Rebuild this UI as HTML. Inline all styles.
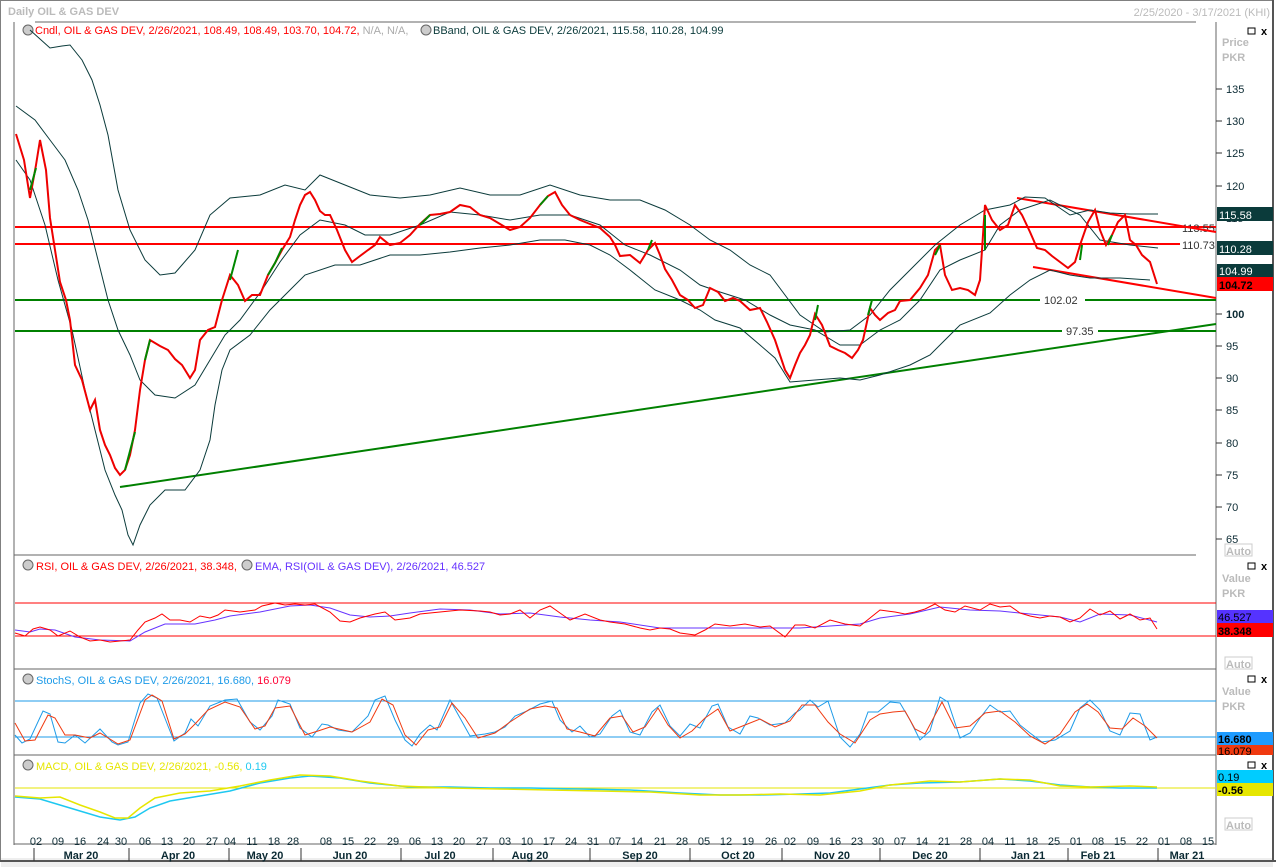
<!DOCTYPE html>
<html><head><meta charset="utf-8"><style>
body{margin:0;background:#fff;font-family:"Liberation Sans",sans-serif}
svg{display:block}
text{font-family:"Liberation Sans",sans-serif;font-size:11px}
</style></head><body>
<svg width="1276" height="867" viewBox="0 0 1276 867">
<rect width="1276" height="867" fill="#fff"/>
<rect x="0.5" y="0.5" width="1273" height="860" fill="none" stroke="#808080"/>
<rect x="1" y="858" width="1272" height="9" fill="#eee"/>
<line x1="0" y1="861" x2="1276" y2="861" stroke="#555" stroke-width="2"/>
<line x1="1273" y1="0" x2="1273" y2="861" stroke="#555" stroke-width="2"/>
<text x="8" y="15" fill="#bbb" font-weight="bold" font-size="12">Daily OIL &amp; GAS DEV</text>
<text x="1270" y="16" fill="#bbb" text-anchor="end">2/25/2020 - 3/17/2021 (KHI)</text>
<line x1="35" y1="22" x2="1196" y2="22" stroke="#666"/>
<line x1="14" y1="22" x2="14" y2="845" stroke="#666"/>
<line x1="1216" y1="22" x2="1216" y2="845" stroke="#666"/>
<line x1="14" y1="555" x2="1196" y2="555" stroke="#666"/>
<line x1="14" y1="669" x2="1216" y2="669" stroke="#666"/>
<line x1="14" y1="755" x2="1216" y2="755" stroke="#666"/>
<line x1="14" y1="844" x2="1216" y2="844" stroke="#666"/>
<circle cx="28" cy="30" r="5" fill="#ccc" stroke="#666"/>
<text x="35" y="34" fill="#f00">Cndl, OIL &amp; GAS DEV, 2/26/2021, 108.49, 108.49, 103.70, 104.72, <tspan fill="#aaa">N/A, N/A,</tspan></text>
<circle cx="426" cy="30" r="5" fill="#ccc" stroke="#666"/>
<text x="433" y="34" fill="#0b3b3b">BBand, OIL &amp; GAS DEV, 2/26/2021, 115.58, 110.28, 104.99</text>
<circle cx="28" cy="565" r="5" fill="#ccc" stroke="#666"/>
<text x="36" y="570" fill="#f00">RSI, OIL &amp; GAS DEV, 2/26/2021, 38.348,</text>
<circle cx="247" cy="565" r="5" fill="#ccc" stroke="#666"/>
<text x="255" y="570" fill="#6633ff">EMA, RSI(OIL &amp; GAS DEV), 2/26/2021, 46.527</text>
<circle cx="28" cy="679" r="5" fill="#ccc" stroke="#666"/>
<text x="36" y="684" fill="#1e9be8">StochS, OIL &amp; GAS DEV, 2/26/2021, 16.680, <tspan fill="#f03">16.079</tspan></text>
<circle cx="28" cy="765" r="5" fill="#ccc" stroke="#666"/>
<text x="36" y="770" fill="#e6e600">MACD, OIL &amp; GAS DEV, 2/26/2021, -0.56, <tspan fill="#1ec8f0">0.19</tspan></text>
<g fill="none" stroke="#000"><rect x="1248" y="28" width="7" height="6"/><rect x="1248" y="563" width="7" height="6"/><rect x="1248" y="676" width="7" height="6"/><rect x="1248" y="762" width="7" height="6"/></g>
<g font-size="10" font-weight="bold"><text x="1261" y="35">x</text><text x="1261" y="570">x</text><text x="1261" y="683">x</text><text x="1261" y="769">x</text></g>
<g fill="#bbb" font-weight="bold" font-size="11"><text x="1222" y="46">Price</text><text x="1222" y="61">PKR</text>
<text x="1222" y="582">Value</text><text x="1222" y="597">PKR</text>
<text x="1222" y="695">Value</text><text x="1222" y="710">PKR</text></g>
<g fill="#0b2a33" font-size="11">
<text x="1226" y="93">135</text><text x="1226" y="125">130</text><text x="1226" y="157">125</text><text x="1226" y="190">120</text><text x="1226" y="222">115</text><text x="1226" y="254">110</text>
<text x="1226" y="318" font-weight="bold" font-size="12">100</text><text x="1226" y="350">95</text><text x="1226" y="382">90</text><text x="1226" y="414">85</text><text x="1226" y="447">80</text><text x="1226" y="479">75</text><text x="1226" y="511">70</text><text x="1226" y="543">65</text></g>
<g stroke="#333"><line x1="1216" y1="89" x2="1222" y2="89"/><line x1="1216" y1="121" x2="1222" y2="121"/><line x1="1216" y1="153" x2="1222" y2="153"/><line x1="1216" y1="186" x2="1222" y2="186"/><line x1="1216" y1="314" x2="1222" y2="314"/><line x1="1216" y1="346" x2="1222" y2="346"/><line x1="1216" y1="378" x2="1222" y2="378"/><line x1="1216" y1="410" x2="1222" y2="410"/><line x1="1216" y1="443" x2="1222" y2="443"/><line x1="1216" y1="475" x2="1222" y2="475"/><line x1="1216" y1="507" x2="1222" y2="507"/><line x1="1216" y1="539" x2="1222" y2="539"/></g>
<g fill="none" stroke="#ccc"><rect x="1225" y="544" width="27" height="12"/><rect x="1225" y="657" width="27" height="12"/><rect x="1225" y="818" width="27" height="12"/></g>
<g fill="#bbb" font-size="11" font-weight="bold"><text x="1226" y="555">Auto</text><text x="1226" y="668">Auto</text><text x="1226" y="829">Auto</text></g>
<rect x="1217" y="207" width="56" height="14" fill="#0b3b3b"/><text x="1219" y="219" fill="#fff" font-size="12">115.58</text>
<rect x="1217" y="241" width="56" height="14" fill="#0b3b3b"/><text x="1219" y="253" fill="#fff" font-size="12">110.28</text>
<rect x="1217" y="264" width="56" height="13" fill="#0b3b3b"/><text x="1219" y="275" fill="#fff" font-size="12">104.99</text>
<rect x="1217" y="277" width="56" height="14" fill="#f00"/><text x="1219" y="289" fill="#000" font-weight="bold" font-size="12">104.72</text>
<rect x="1217" y="610" width="56" height="13" fill="#5533ff"/><text x="1218" y="621" fill="#000" font-size="12">46.527</text>
<rect x="1217" y="623" width="56" height="14" fill="#f00"/><text x="1218" y="635" fill="#000" font-weight="bold" font-size="12">38.348</text>
<rect x="1217" y="732" width="56" height="13" fill="#1e9bff"/><text x="1218" y="743" fill="#000" font-weight="bold" font-size="12">16.680</text>
<rect x="1217" y="745" width="56" height="10" fill="#f03a10"/><text x="1218" y="755" fill="#000" font-size="12">16.079</text>
<rect x="1217" y="770" width="56" height="13" fill="#00ccff"/><text x="1218" y="781" fill="#000" font-size="12">0.19</text>
<rect x="1217" y="783" width="56" height="13" fill="#e6e600"/><text x="1218" y="794" fill="#000" font-weight="bold" font-size="12">-0.56</text>
<line x1="15" y1="227" x2="1216" y2="227" stroke="#f00" stroke-width="2"/>
<line x1="15" y1="244" x2="1180" y2="244" stroke="#f00" stroke-width="2"/>
<text x="1182" y="232" fill="#333">113.55</text><text x="1182" y="249" fill="#333">110.73</text>
<line x1="15" y1="300" x2="1040" y2="300" stroke="#008000" stroke-width="2"/><line x1="1085" y1="300" x2="1216" y2="300" stroke="#008000" stroke-width="2"/>
<text x="1044" y="304" fill="#333">102.02</text>
<line x1="15" y1="331" x2="1062" y2="331" stroke="#008000" stroke-width="2"/><line x1="1098" y1="331" x2="1216" y2="331" stroke="#008000" stroke-width="2"/>
<text x="1066" y="335" fill="#333">97.35</text>
<line x1="120" y1="487" x2="1216" y2="324" stroke="#008000" stroke-width="2"/>
<line x1="1017" y1="198" x2="1216" y2="232" stroke="#f00" stroke-width="2"/>
<line x1="1033" y1="267" x2="1216" y2="298" stroke="#f00" stroke-width="2"/>
<g fill="none" stroke="#0b3b3b" stroke-width="1">
<polyline points="16,106 35,120 50,140 65,160 78,190 88,220 98,260 108,300 118,330 130,355 140,380 155,395 175,398 195,385 210,360 225,335 240,320 262,290 280,262 300,235 320,220 345,225 365,235 390,235 420,225 450,212 480,215 510,220 540,215 570,215 600,225 625,245 650,255 680,270 700,285 720,292 745,300 770,315 790,325 815,330 840,345 860,345 880,330 900,320 920,300 940,270 960,260 985,250 1000,225 1020,210 1050,200 1080,215 1100,240 1130,245 1158,248"/>
<polyline points="30,30 50,48 62,46 70,45 82,60 92,80 100,105 108,135 118,190 130,230 145,260 160,275 175,273 195,250 210,215 230,198 260,195 285,185 305,190 320,175 345,185 370,195 400,198 430,195 460,188 490,195 520,195 550,185 580,195 610,200 640,200 665,210 690,225 710,240 730,250 750,265 770,275 800,315 825,332 850,330 870,315 890,290 910,270 935,245 960,225 985,210 1010,205 1025,197 1045,198 1070,215 1090,210 1110,213 1130,214 1158,214"/>
<polyline points="16,160 30,180 45,225 58,280 72,330 85,390 95,430 105,470 115,495 122,510 128,535 133,545 140,525 150,505 165,490 185,490 200,470 210,440 215,405 222,370 230,350 250,335 270,310 290,290 305,275 335,265 360,265 390,255 420,255 450,252 480,248 510,245 540,240 565,240 590,245 610,255 630,270 655,290 680,300 700,310 715,320 740,328 760,345 775,358 790,382 815,380 840,378 860,380 880,375 910,365 930,355 945,340 960,325 990,313 1010,295 1030,280 1050,270 1070,275 1090,278 1120,278 1150,280"/>
</g>
<polyline fill="none" stroke="#e00" stroke-width="2" points="16,134 24,160 30,198 36,165 40,140 46,170 50,218 55,250 60,282 66,300 70,320 75,365 82,380 90,410 95,400 100,430 105,445 110,455 115,468 120,475 125,470 130,455 135,430 140,390 145,360 150,340 160,346 168,350 175,359 182,365 190,378 195,370 200,340 208,330 215,327 222,300 230,275 238,285 245,301 252,295 260,295 268,275 275,263 282,250 290,237 295,220 300,205 305,195 310,192 315,200 320,211 325,215 330,215 337,230 345,250 352,262 360,256 368,250 375,245 380,237 390,245 400,243 410,235 420,224 430,215 440,214 450,212 460,205 470,207 480,215 490,218 500,224 510,230 520,227 530,218 540,205 548,196 555,192 562,205 570,215 580,220 590,224 600,228 610,237 615,245 620,256 630,255 640,263 648,250 655,243 660,255 665,269 672,280 680,295 688,300 695,308 703,305 710,288 718,292 725,301 733,298 740,301 750,310 760,308 767,322 775,340 780,355 785,370 790,378 795,365 800,353 805,345 810,335 815,314 822,325 830,346 838,350 845,353 852,358 858,350 863,340 870,308 875,315 880,320 888,313 895,310 900,301 910,300 920,288 928,275 935,250 940,245 945,275 952,290 960,288 968,290 975,295 980,280 985,205 992,220 1000,230 1008,225 1015,205 1022,215 1030,232 1037,248 1045,250 1052,256 1060,262 1068,268 1075,262 1080,245 1088,222 1095,210 1100,230 1106,245 1112,235 1118,222 1125,215 1130,240 1136,245 1142,255 1150,262 1157,284"/>
<g stroke="#080" stroke-width="2" fill="none">
<polyline points="30,190 36,168"/><polyline points="125,470 135,432"/><polyline points="145,360 150,340"/><polyline points="230,280 238,250"/><polyline points="268,275 275,263 282,248"/><polyline points="420,225 430,215"/><polyline points="540,205 548,196"/><polyline points="648,250 652,240"/><polyline points="815,320 818,305"/><polyline points="868,315 872,300"/><polyline points="935,255 940,245"/><polyline points="985,250 985,215"/><polyline points="1080,260 1082,245"/><polyline points="1108,245 1112,235"/></g>
<line x1="15" y1="603" x2="1216" y2="603" stroke="#f00"/>
<line x1="15" y1="636" x2="1216" y2="636" stroke="#f00"/>
<polyline fill="none" stroke="#6633ff" points="15,630 30,632 40,629 55,630 75,637 100,640 130,641 145,632 165,624 195,624 215,620 230,616 260,612 290,606 310,605 330,608 350,615 370,617 390,616 410,613 440,609 470,610 500,614 530,613 560,617 590,620 620,622 660,628 700,628 730,628 770,628 800,628 830,626 860,624 880,618 910,614 940,607 970,610 1000,611 1030,614 1060,617 1080,622 1100,614 1130,615 1157,622"/>
<polyline fill="none" stroke="#f00" points="15,633 25,636 33,629 40,627 50,630 58,636 70,631 80,637 90,641 100,640 110,642 120,641 130,640 138,630 145,622 155,618 162,614 170,620 180,620 190,622 200,616 210,618 218,615 225,610 240,612 255,610 262,606 275,603 285,605 295,604 305,605 315,604 330,612 340,621 350,622 360,618 375,614 385,612 395,620 410,618 420,614 440,612 460,610 480,611 490,612 500,615 510,614 520,610 530,618 540,610 550,606 560,613 570,620 585,614 600,620 610,622 625,624 640,628 650,630 660,628 670,629 680,633 695,635 705,630 715,624 730,626 745,624 760,627 770,626 785,637 795,625 805,625 815,628 830,620 845,624 860,626 870,618 880,610 895,612 905,614 915,612 925,609 935,604 945,610 955,612 965,606 980,610 990,604 1000,607 1010,606 1020,613 1030,616 1040,618 1050,616 1060,617 1070,622 1080,618 1090,609 1100,615 1110,611 1120,619 1130,614 1140,620 1150,618 1157,629"/>
<line x1="15" y1="701" x2="1216" y2="701" stroke="#1e9be8"/>
<line x1="15" y1="737" x2="1216" y2="737" stroke="#1e9be8"/>
<polyline fill="none" stroke="#1e9be8" points="15,735 22,743 30,739 43,711 50,714 58,742 65,743 75,735 85,743 100,729 112,742 118,745 128,742 140,703 148,694 157,698 168,726 174,741 185,733 191,719 198,726 210,706 225,700 237,699 250,722 260,730 272,716 278,700 290,704 300,728 312,737 322,724 328,725 338,730 352,732 368,716 375,700 385,696 395,720 405,740 412,746 420,734 430,725 437,730 450,700 460,718 470,736 485,734 495,732 505,727 515,716 527,711 540,704 552,701 560,720 572,732 580,726 590,737 600,734 612,716 620,710 630,732 640,735 652,712 660,705 670,726 680,736 690,724 700,728 712,706 718,704 728,727 740,734 750,716 758,718 770,725 785,723 795,713 800,710 810,700 818,707 828,701 840,737 850,747 860,734 868,712 878,712 890,702 900,703 910,720 920,740 930,731 940,697 948,702 960,738 970,733 980,718 990,705 1000,712 1010,711 1020,725 1030,733 1042,742 1055,740 1070,731 1080,708 1090,700 1100,710 1110,731 1120,735 1130,713 1140,714 1150,740 1157,737"/>
<polyline fill="none" stroke="#f03a10" points="15,723 25,741 35,740 48,715 55,718 65,735 75,735 90,738 100,733 118,744 130,740 145,700 152,695 162,701 174,739 185,734 195,724 208,710 225,702 240,707 255,729 265,726 275,708 290,706 305,735 318,731 330,727 352,732 370,722 382,699 393,705 405,735 416,745 428,730 440,727 452,703 465,718 478,738 495,733 510,722 530,709 545,706 557,708 567,729 580,732 595,736 610,718 622,716 633,732 645,727 658,708 668,725 680,738 692,731 705,718 718,709 730,731 745,725 760,719 775,727 790,721 802,705 815,705 828,722 840,734 855,743 870,720 880,714 893,712 905,711 915,729 925,734 942,702 955,728 970,726 985,713 1000,711 1015,722 1030,736 1045,744 1060,734 1075,712 1087,704 1098,712 1110,728 1122,729 1133,718 1145,726 1157,738"/>
<line x1="15" y1="788" x2="1216" y2="788" stroke="#e6e600"/>
<polyline fill="none" stroke="#1ec8f0" stroke-width="1.5" points="15,797 40,799 60,805 80,811 100,817 120,820 135,817 150,808 170,801 200,796 230,791 260,783 290,778 310,776 340,778 370,783 410,787 450,787 490,788 530,788 580,789 630,790 680,793 720,795 760,795 800,794 830,793 860,789 890,785 920,783 960,782 1000,779 1030,781 1060,785 1090,787 1120,788 1157,788"/>
<polyline fill="none" stroke="#e6e600" stroke-width="1.5" points="15,796 40,798 60,797 80,805 100,812 115,818 128,818 140,808 155,798 180,793 210,791 240,786 270,780 300,775 330,776 360,781 400,786 450,788 500,789 550,790 600,791 650,792 700,795 740,795 780,794 820,795 860,791 890,785 930,781 960,782 1000,779 1030,780 1060,786 1090,787 1130,786 1157,787"/>
<g fill="#0b2a33" font-size="11" text-anchor="middle">
<text x="36" y="845">02</text><text x="58" y="845">09</text><text x="80" y="845">16</text><text x="103" y="845">24</text><text x="121" y="845">30</text><text x="145" y="845">06</text><text x="167" y="845">13</text><text x="189" y="845">20</text><text x="212" y="845">27</text><text x="230" y="845">04</text><text x="252" y="845">11</text><text x="274" y="845">18</text><text x="293" y="845">28</text><text x="326" y="845">08</text><text x="348" y="845">15</text><text x="370" y="845">22</text><text x="393" y="845">29</text><text x="415" y="845">06</text><text x="437" y="845">13</text><text x="459" y="845">20</text><text x="482" y="845">27</text><text x="505" y="845">03</text><text x="527" y="845">10</text><text x="549" y="845">17</text><text x="571" y="845">24</text><text x="593" y="845">31</text><text x="615" y="845">07</text><text x="637" y="845">14</text><text x="660" y="845">21</text><text x="682" y="845">28</text><text x="704" y="845">05</text><text x="726" y="845">12</text><text x="748" y="845">19</text><text x="771" y="845">26</text><text x="790" y="845">02</text><text x="813" y="845">09</text><text x="835" y="845">16</text><text x="857" y="845">23</text><text x="878" y="845">30</text><text x="900" y="845">07</text><text x="922" y="845">14</text><text x="944" y="845">21</text><text x="966" y="845">28</text><text x="988" y="845">04</text><text x="1010" y="845">11</text><text x="1032" y="845">18</text><text x="1054" y="845">25</text><text x="1076" y="845">01</text><text x="1098" y="845">08</text><text x="1120" y="845">15</text><text x="1142" y="845">22</text><text x="1164" y="845">01</text><text x="1186" y="845">08</text><text x="1208" y="845">15</text></g>
<g fill="#0b2a33" font-size="11" font-weight="bold" text-anchor="middle">
<text x="81" y="859">Mar 20</text><text x="178" y="859">Apr 20</text><text x="265" y="859">May 20</text><text x="350" y="859">Jun 20</text><text x="440" y="859">Jul 20</text><text x="530" y="859">Aug 20</text><text x="640" y="859">Sep 20</text><text x="738" y="859">Oct 20</text><text x="832" y="859">Nov 20</text><text x="930" y="859">Dec 20</text><text x="1028" y="859">Jan 21</text><text x="1098" y="859">Feb 21</text><text x="1187" y="859">Mar 21</text></g>
<g stroke="#333"><line x1="34" y1="848" x2="34" y2="861"/><line x1="129" y1="848" x2="129" y2="861"/><line x1="229" y1="848" x2="229" y2="861"/><line x1="301" y1="848" x2="301" y2="861"/><line x1="401" y1="848" x2="401" y2="861"/><line x1="493" y1="848" x2="493" y2="861"/><line x1="590" y1="848" x2="590" y2="861"/><line x1="690" y1="848" x2="690" y2="861"/><line x1="782" y1="848" x2="782" y2="861"/><line x1="880" y1="848" x2="880" y2="861"/><line x1="980" y1="848" x2="980" y2="861"/><line x1="1068" y1="848" x2="1068" y2="861"/><line x1="1158" y1="848" x2="1158" y2="861"/></g>
</svg>
</body></html>
